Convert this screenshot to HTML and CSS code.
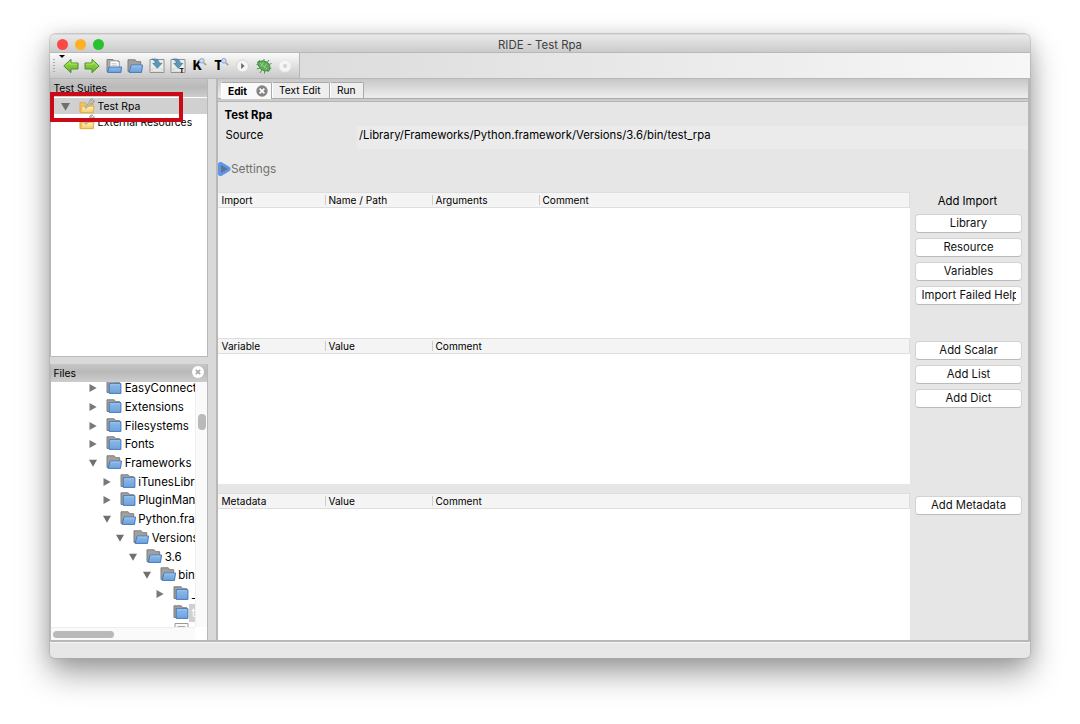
FILE: index.html
```html
<!DOCTYPE html>
<html lang="en">
<head>
<meta charset="utf-8">
<title>RIDE - Test Rpa</title>
<link rel="stylesheet" href="styles.css">
</head>
<body>
<svg class="defs" aria-hidden="true">
  <defs>
    <linearGradient id="gGreen" x1="0" y1="0" x2="0" y2="1"><stop offset="0" stop-color="#a5dc4c"/><stop offset="1" stop-color="#63b527"/></linearGradient>
    <linearGradient id="gBlue" x1="0" y1="0" x2="0" y2="1"><stop offset="0" stop-color="#8db9e8"/><stop offset="1" stop-color="#6ea3dd"/></linearGradient>
    <linearGradient id="gYellow" x1="0" y1="0" x2="0" y2="1"><stop offset="0" stop-color="#fff3c4"/><stop offset="1" stop-color="#f7cb66"/></linearGradient>
    <symbol id="arrow" viewBox="0 0 16 16"><path d="M.8 8 8 1.3V5h7v6H8v3.7Z" fill="url(#gGreen)" stroke="#4d8f2a" stroke-linejoin="round"/><path d="M2.5 8 7 3.8V6h6.8" fill="none" stroke="#c8ed88" stroke-width=".7"/></symbol>
    <symbol id="closed" viewBox="0 0 16 16"><path d="M1 13.5V1.8h7.2l1.5 1.9h4V13Z" fill="#a0a19e" stroke="#7d7e7c"/><path d="M3.2 4.7h11.7v9.7H3.2Z" fill="url(#gBlue)" stroke="#4678b8"/><path d="M4.2 5.7H14" stroke="#a9cbf0" stroke-width=".8"/></symbol>
    <symbol id="open" viewBox="0 0 16 16"><path d="M1 13.5V1.8h7.2l1.5 1.9h4V13Z" fill="#a0a19e" stroke="#7d7e7c"/><path d="M4.5 7h11l-1 7.4H2.2L3.8 7.6Z" fill="url(#gBlue)" stroke="#4678b8"/><path d="M5 8h9.4" stroke="#a9cbf0" stroke-width=".8"/></symbol>
    <symbol id="docfolder" viewBox="0 0 16 16"><path d="M1 13.5V1.5h6l1.2 1.5H13v10Z" fill="#aaa" stroke="#808080"/><path d="M4 3h7.5L13.2 4.8V11H4Z" fill="#fff" stroke="#999" stroke-width=".7"/><path d="M5.5 5.7h5M5.5 7.3h6" stroke="#aaa" stroke-width=".7"/><path d="M3 9h12.5l-.6 5.4H1.6Z" fill="url(#gBlue)" stroke="#4678b8"/></symbol>
    <symbol id="save" viewBox="0 0 16 16"><path d="M1 1.5h14v13H1Z" fill="#eceeec" stroke="#90928e"/><path d="M3 11h10v2H3Z" fill="#fff" stroke="#b5b5b5" stroke-width=".6"/><path d="M2.8 1.2C7 .2 10.2 1.8 10.2 5.3h2.7L8.3 10.2 3.8 5.3h2.6c0-2-1.1-3.2-3.6-4.1Z" fill="#5c96bb" stroke="#3d759c" stroke-width=".7"/></symbol>
    <symbol id="suite" viewBox="0 0 16 16"><path d="M1 14.6V4.7h5.2l1 1.5h7v8.4Z" fill="#efc566" stroke="#e0ab48"/><path d="M3.2 8.2H15l-1 6.4H1.5Z" fill="url(#gYellow)" stroke="#e6b04a"/><path d="m5.8 9.4 4.8-5.1c-.5-2 1-3.8 3.2-3.4l-1.5 1.7.9 1 2-1.3c.3 2.5-1.6 3.7-3.3 3.2l-4.8 5Z" fill="#c6c7c4" stroke="#92938f" stroke-width=".7"/></symbol>
    <symbol id="magnifier" viewBox="0 0 8 8"><path d="m4.5 4.5 2.7 2.6" stroke="#c39a58" stroke-width="1.5"/><circle cx="2.8" cy="2.8" r="2.3" fill="#c9def7" stroke="#83a5d2"/></symbol>
    <symbol id="right" viewBox="0 0 8 8"><path d="M.5 0v8L7.7 4Z" fill="#797979"/></symbol>
    <symbol id="down" viewBox="0 0 8 8"><path d="M0 .8h8L4 7.7Z" fill="#707070"/></symbol>
  </defs>
</svg>
<div class="window">
  <header class="titlebar"><div class="lights"><i class="red"></i><i class="amber"></i><i class="green"></i></div><h1>RIDE - Test Rpa</h1></header>
  <div class="toolrow">
    <nav class="toolbar">
      <i class="grip"></i><i class="chevron"></i>
      <svg class="tool"><use href="#arrow"/></svg>
      <svg class="tool flip"><use href="#arrow"/></svg>
      <svg class="tool"><use href="#docfolder"/></svg>
      <svg class="tool"><use href="#open"/></svg>
      <svg class="tool"><use href="#save"/></svg>
      <svg class="tool" viewBox="0 0 16 16"><use href="#save"/><path d="M9.5 10.5h4M11.8 10.5v4.5" stroke="#222" stroke-width="1.2"/></svg>
      <span class="tool letter">K<svg><use href="#magnifier"/></svg></span>
      <span class="tool letter">T<svg><use href="#magnifier"/></svg></span>
      <svg class="tool" viewBox="0 0 16 16"><circle cx="8.5" cy="8" r="6" fill="#f5f5f5" stroke="#d4d4d4"/><path d="M7.2 5v6l3.3-3Z" fill="#666"/></svg>
      <svg class="tool" viewBox="0 0 16 16"><path d="m3 2 2.5 3M8 1v4M13 2l-2.3 3M.5 6.5l4 .8M.8 11l4-1.2M4 15l1.8-3M8.5 15.5v-3M12.5 14l-2-2.5M15.3 10.5 11.5 9M15.5 5.5l-4 1.5" stroke="#4b964b" stroke-width="1"/><path d="M1.5 4Q7 1.5 11.5 4.3q3.8 3.6 2 8-5 2-8.5-1Q2 8.5 1.5 4Z" fill="#60ad59" stroke="#459145"/><path d="m4 5 7 6M7.5 4.3 5 8.5M10.5 6 8 10" stroke="#93cd84"/></svg>
      <svg class="tool" viewBox="0 0 16 16"><circle cx="8" cy="8" r="6" fill="#f5f5f5" stroke="#e8e8e8"/><path d="M6.3 6.3h3.4v3.4H6.3Z" fill="#d0d0d0"/></svg>
    </nav>
  </div>
  <main class="body">
    <aside class="side">
      <section class="panel suites">
        <h2>Test Suites</h2>
        <div class="suite-row selected"><svg class="tri"><use href="#down"/></svg><svg class="sicon"><use href="#suite"/></svg><span>Test Rpa</span></div>
        <div class="suite-row"><i class="tri"></i><svg class="sicon"><use href="#suite"/></svg><span>External Resources</span></div>
        <div class="highlight"></div>
      </section>
      <section class="panel files">
        <h2>Files<svg class="close" viewBox="0 0 12 12"><circle cx="6" cy="6" r="6" fill="#fff"/><path d="m3.8 3.8 4.4 4.4m0-4.4L3.8 8.2" stroke="#aaa" stroke-width="1.7"/></svg></h2>
        <div class="filebox">
          <div class="filetree">
            <div class="file l0"><svg class="tri"><use href="#right"/></svg><svg class="ficon"><use href="#closed"/></svg><span>EasyConnect</span></div>
            <div class="file l0"><svg class="tri"><use href="#right"/></svg><svg class="ficon"><use href="#closed"/></svg><span>Extensions</span></div>
            <div class="file l0"><svg class="tri"><use href="#right"/></svg><svg class="ficon"><use href="#closed"/></svg><span>Filesystems</span></div>
            <div class="file l0"><svg class="tri"><use href="#right"/></svg><svg class="ficon"><use href="#closed"/></svg><span>Fonts</span></div>
            <div class="file l0"><svg class="tri"><use href="#down"/></svg><svg class="ficon"><use href="#open"/></svg><span>Frameworks</span></div>
            <div class="file l1"><svg class="tri"><use href="#right"/></svg><svg class="ficon"><use href="#closed"/></svg><span>iTunesLibr</span></div>
            <div class="file l1"><svg class="tri"><use href="#right"/></svg><svg class="ficon"><use href="#closed"/></svg><span>PluginMan</span></div>
            <div class="file l1"><svg class="tri"><use href="#down"/></svg><svg class="ficon"><use href="#open"/></svg><span>Python.fra</span></div>
            <div class="file l2"><svg class="tri"><use href="#down"/></svg><svg class="ficon"><use href="#open"/></svg><span>Versions</span></div>
            <div class="file l3"><svg class="tri"><use href="#down"/></svg><svg class="ficon"><use href="#open"/></svg><span>3.6</span></div>
            <div class="file l4"><svg class="tri"><use href="#down"/></svg><svg class="ficon"><use href="#open"/></svg><span>bin</span></div>
            <div class="file l5"><svg class="tri"><use href="#right"/></svg><svg class="ficon"><use href="#closed"/></svg><span>_</span></div>
            <div class="file l5"><i class="tri"></i><svg class="ficon"><use href="#closed"/></svg><span class="picked">t</span></div>
            <div class="file l5"><i class="tri"></i><svg class="ficon" viewBox="0 0 16 16"><path d="M2 1.5h13V15H2Z" fill="#fafafa" stroke="#999"/><path d="M4.5 4.5H12" stroke="#aaa"/></svg></div>
          </div>
          <div class="vscroll"><i></i></div>
          <div class="hscroll"><i></i></div>
        </div>
      </section>
    </aside>
    <section class="editor">
      <nav class="tabs">
        <span class="tab active">Edit<svg viewBox="0 0 12 12"><circle cx="6" cy="6" r="5.7" fill="#858585"/><path d="m3.6 3.6 4.8 4.8m0-4.8L3.6 8.4" stroke="#fff" stroke-width="1.6"/></svg></span><span class="tab text-edit">Text Edit</span><span class="tab run">Run</span>
      </nav>
      <div class="page">
        <h3>Test Rpa</h3>
        <div class="source"><span class="label">Source</span><span class="path">/Library/Frameworks/Python.framework/Versions/3.6/bin/test_rpa</span></div>
        <div class="settings"><svg viewBox="0 0 13 14"><path d="M2.5 2.5v9l7.5-4.5Z" fill="#5c95ec" stroke="#5c95ec" stroke-width="5" stroke-linejoin="round"/><path d="M3 3v8l7-4Z" fill="#66718a"/></svg><span>Settings</span></div>
        <div class="group imports">
          <div class="table"><div class="thead"><span>Import</span><span>Name / Path</span><span>Arguments</span><span>Comment</span></div></div>
          <div class="actions"><b>Add Import</b><button>Library</button><button>Resource</button><button>Variables</button><button class="cut"><span>Import Failed Help</span></button></div>
        </div>
        <div class="group variables">
          <div class="table"><div class="thead"><span>Variable</span><span>Value</span><span>Comment</span></div></div>
          <div class="actions"><button>Add Scalar</button><button>Add List</button><button>Add Dict</button></div>
        </div>
        <div class="group metadata">
          <div class="table"><div class="thead"><span>Metadata</span><span>Value</span><span>Comment</span></div></div>
          <div class="actions"><button>Add Metadata</button></div>
        </div>
      </div>
    </section>
  </main>
  <footer class="status"></footer>
</div>
</body>
</html>
```

FILE: styles.css
```css
* { box-sizing: border-box; }
body { margin: 0; width: 1080px; height: 724px; padding: 34px 50px; overflow: hidden; background: #fff; font-family: Inter, "Liberation Sans", sans-serif; font-size: 11.5px; color: #000; }
.defs { position: absolute; width: 0; height: 0; }
h1, h2, h3 { margin: 0; font-weight: 400; }
svg { display: block; flex: none; }
.window { width: 980px; height: 624px; display: flex; flex-direction: column; border-radius: 5px; background: #d9d9d9; box-shadow: 0 0 0 .5px #aaa, 0 15px 32px rgba(0,0,0,.38), 0 2px 18px rgba(0,0,0,.12); overflow: hidden; }
.titlebar { height: 19px; flex: none; display: grid; grid-template-columns: 1fr auto 1fr; align-items: center; background: linear-gradient(#e9e9e9, #cbcbcb); border-top: 1px solid #d7d7d7; border-bottom: 1px solid #b8b8b8; }
.titlebar h1 { font-size: 11.4px; line-height: 17px; color: #404040; padding-top: 2px; }
.lights { display: flex; gap: 7px; padding-left: 7px; }
.lights i { width: 11px; height: 11px; border-radius: 50%; }
.red { background: #fc4948; } .amber { background: #fdb125; } .green { background: #28c231; }
.toolrow { height: 26px; flex: none; background: linear-gradient(90deg, #dcdcdc 25%, #f7f7f7); border-bottom: 1px solid #b8b8b8; }
.toolbar { position: relative; width: 250px; height: 25px; display: flex; align-items: center; gap: 5.4px; padding-left: 13px; background: linear-gradient(#fafafa, #c9c9c9); border-right: 1px solid #b7b7b7; }
.grip { position: absolute; left: 3px; top: 6px; width: 2px; height: 15px; background: repeating-linear-gradient(#aaa 0 1px, transparent 1px 3px); }
.chevron { position: absolute; left: 9px; top: 2px; border: 3.5px solid transparent; border-top-color: #000; border-bottom: 0; }
.tool { width: 16px; height: 16px; flex: none; }
.flip { transform: scaleX(-1); }
.letter { position: relative; font: 800 12.5px/16px Inter, sans-serif; padding-left: 1.5px; }
.letter svg { position: absolute; right: 0; top: 0; width: 8px; height: 8px; }
.body { flex: 1; min-height: 0; display: flex; gap: 8px; background: #d9d9d9; border-bottom: 2px solid #b8b8b8; }
.side { width: 158px; display: flex; flex-direction: column; gap: 7px; }
.panel { border: 1px solid #b8b8b8; border-top: 0; background: #fff; }
.panel h2 { height: 18px; font-size: 10.3px; line-height: 17px; padding-left: 2.5px; background: linear-gradient(#c6c6c6, #b9b9b9 45%, #cdcdcd); }
.suites { position: relative; height: 278px; flex: none; }
.suites h2 { line-height: 18px; }
.suite-row { height: 16px; display: flex; align-items: center; padding-left: 10px; font-size: 10.4px; }
.suite-row.selected { background: #d0d0d0; margin-top: 1px; }
.suite-row .sicon { width: 16px; height: 16px; margin: 0 2.5px 0 9px; }
.tri { width: 9px; height: 9px; flex: none; }
.highlight { position: absolute; left: -1px; top: 13px; width: 133px; height: 30px; border: 4px solid #cb0a18; }
.files { flex: 1; min-height: 0; display: flex; flex-direction: column; border-bottom: 0; }
.files h2 { display: flex; justify-content: space-between; padding-right: 3px; flex: none; align-items: center; }
.close { width: 12px; height: 12px; margin-top: -2px; }
.filebox { flex: 1; min-height: 0; display: grid; grid-template: 1fr 13px / 144px 12px; }
.filetree { overflow: hidden; min-height: 0; }
.file { height: 18.7px; display: flex; align-items: center; font-size: 11.5px; line-height: 18px; }
.file:first-child { margin-top: -3px; }
.file .tri { width: 8px; height: 8px; margin-right: 9px; }
.file .ficon { width: 16px; height: 16px; margin-right: 2.7px; margin-top: -2px; }
.l0 { padding-left: 38px; } .l1 { padding-left: 51.5px; } .l2 { padding-left: 65px; } .l3 { padding-left: 78px; } .l4 { padding-left: 91.5px; } .l5 { padding-left: 105px; }
.picked { background: #d0d0d0; color: #fff; padding: 0 3px; margin-left: -3px; }
.vscroll { background: #fafafa; border-left: 1px solid #eee; padding: 32px 0 0 2px; }
.vscroll i { display: block; width: 8px; height: 16px; background: #b9b9b9; border-radius: 4px; }
.hscroll { background: #fafafa; border-top: 1px solid #eee; padding: 3px 2px; }
.hscroll i { display: block; width: 61px; height: 7px; background: #b9b9b9; border-radius: 4px; }
.editor { flex: 1; min-width: 0; display: flex; flex-direction: column; border: solid #b8b8b8; border-width: 0 2px 0 2px; }
.tabs { height: 23px; flex: none; display: flex; align-items: flex-end; padding: 0 0 2px 3px; background: linear-gradient(#c7c7c7, #ececec 18px, #ececec 19px, #aaa 19px 20px, #ccc 20px 22px, #b5b5b5 22px); }
.tab { height: 16px; margin-bottom: 2px; font-size: 10.2px; line-height: 14px; border: 1px solid #aaa; border-bottom: 0; border-left-color: #fff; border-radius: 2px 2px 0 0; padding: 0 6px; background: #eee; }
.tab.active { display: flex; justify-content: space-between; align-items: center; width: 51px; height: 17px; margin-bottom: 1px; padding: 0 3px 0 6px; font-weight: 700; background: #f9f9f9; }
.tab.active svg { width: 12px; height: 12px; }
.text-edit { width: 58px; } .run { width: 34px; }
.page { flex: 1; min-height: 0; background: #e6e6e6; display: flex; flex-direction: column; }
.page h3 { font-size: 11.3px; font-weight: 700; line-height: 24px; height: 24px; padding: 1px 0 0 6.5px; }
.source { height: 23px; display: flex; line-height: 18px; font-size: 11.3px; }
.label { width: 139px; padding-left: 7.5px; }
.path { flex: 1; background: #ebebeb; padding-left: 2px; }
.settings { height: 43px; display: flex; align-items: center; padding-bottom: 4px; font-size: 11.8px; color: #707070; }
.settings svg { width: 13px; height: 14px; }
.group { display: flex; flex: none; }
.imports { height: 146px; } .variables { height: 155px; } .metadata { flex: 1; }
.table { width: 692px; background: #fff; }
.variables .table { height: 146px; }
.thead { display: flex; height: 16px; background: #f4f4f4; border: solid #dedede; border-width: 1px 1px 1px 0; }
.thead span { width: 107px; font-size: 10.1px; line-height: 15px; padding-left: 3.5px; background: linear-gradient(#ccc, #ccc) 0 2px / 1px 10px no-repeat; }
.thead span:first-child { background: none; }
.actions { flex: 1; padding: 2px 6px 0 5px; display: flex; flex-direction: column; gap: 5px; }
.actions b { height: 15px; line-height: 14px; font-size: 11.3px; text-align: center; font-weight: 400; padding-right: 2px; }
.actions button { height: 19px; flex: none; padding: 0; border: 1px solid #d2d2d2; border-bottom-color: #bbb; border-radius: 4px; background: #fff; font: 11.3px/17px Inter, sans-serif; color: #111; }
.cut span { display: block; width: 94px; margin: 0 auto; overflow: hidden; white-space: nowrap; text-align: left; }
.variables .actions, .metadata .actions { padding-top: 3px; }
.status { height: 16px; flex: none; background: #e7e7e7; border-top: 1px solid #f5f5f5; }
```
